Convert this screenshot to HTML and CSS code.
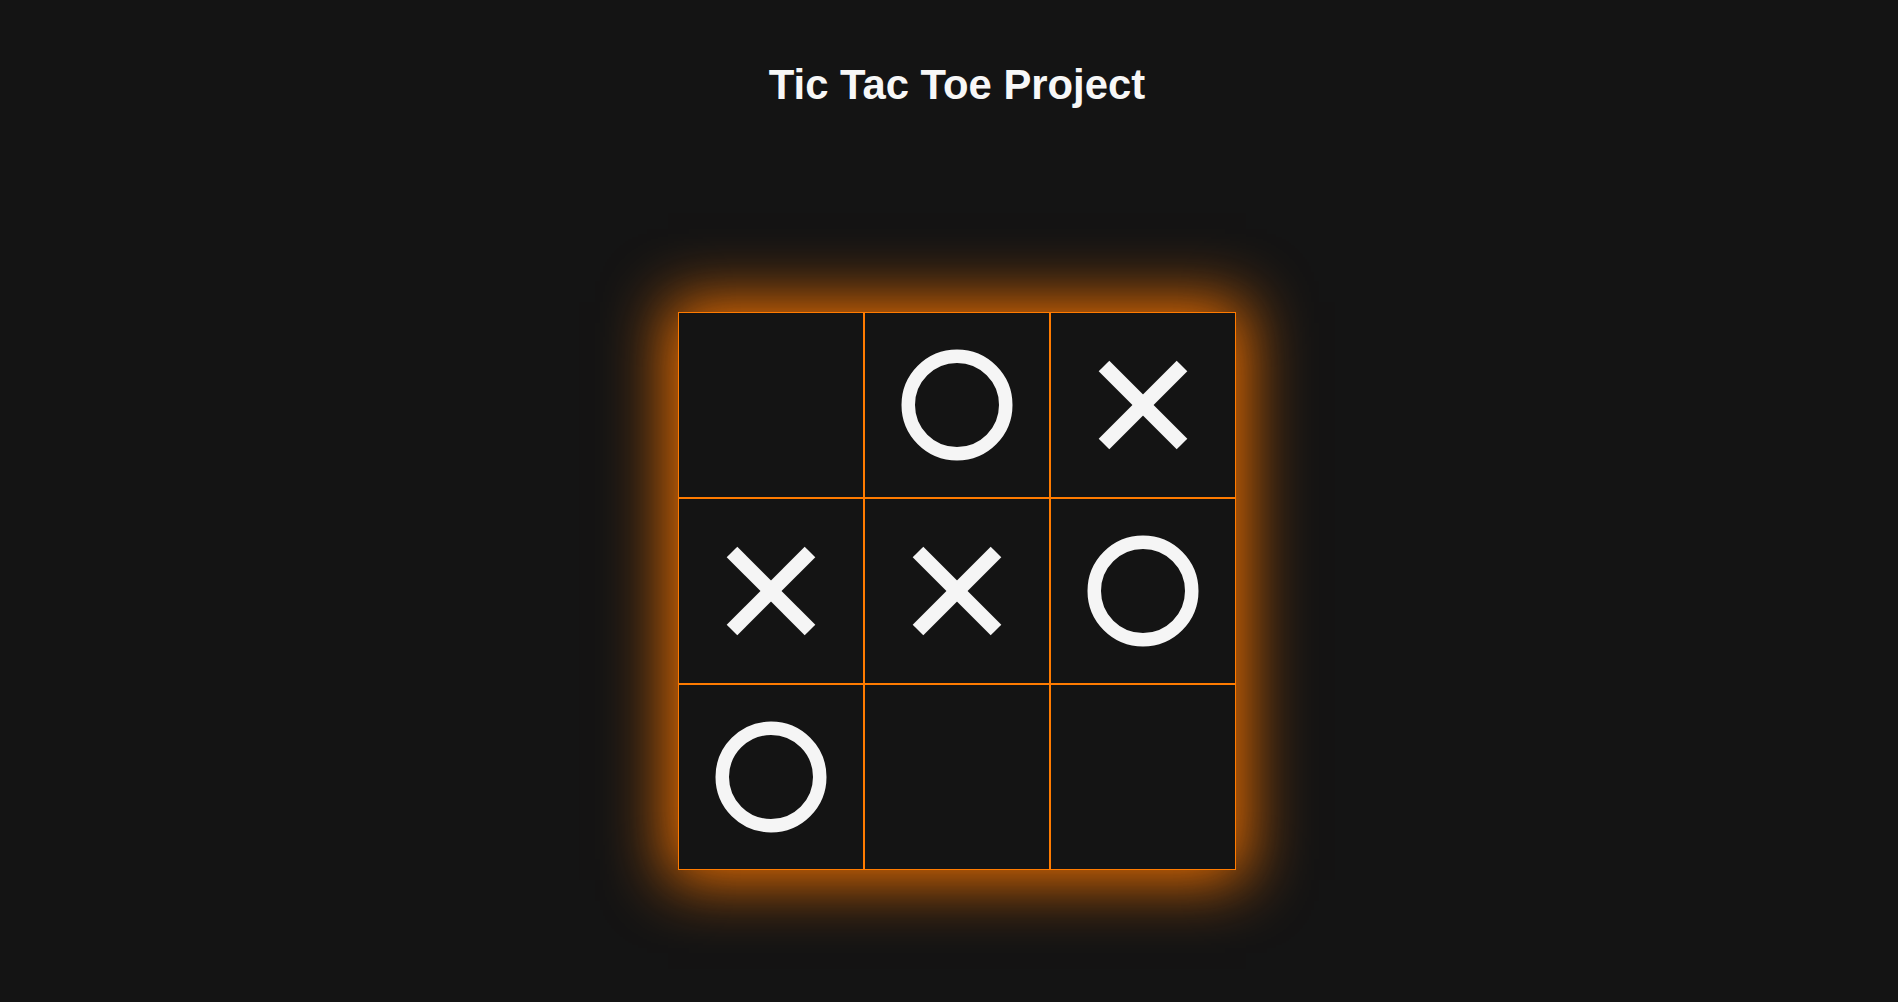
FILE: index.html
```html
<!DOCTYPE html>
<html lang="en">
<head>
<meta charset="utf-8">
<title>Tic Tac Toe Project</title>
<link rel="stylesheet" href="styles.css">
</head>
<body>
<header class="header">
  <h1 class="title">Tic Tac Toe Project</h1>
</header>
<main class="game">
  <div class="board">
    <div class="cell"></div>
    <div class="cell"><svg class="mark-o" viewBox="0 0 112 112" width="112" height="112"><circle cx="56" cy="56" r="48.75"/></svg></div>
    <div class="cell"><svg class="mark-x" viewBox="0 0 90 90" width="90" height="90"><line x1="6" y1="6" x2="84" y2="84"/><line x1="84" y1="6" x2="6" y2="84"/></svg></div>
    <div class="cell"><svg class="mark-x" viewBox="0 0 90 90" width="90" height="90"><line x1="6" y1="6" x2="84" y2="84"/><line x1="84" y1="6" x2="6" y2="84"/></svg></div>
    <div class="cell"><svg class="mark-x" viewBox="0 0 90 90" width="90" height="90"><line x1="6" y1="6" x2="84" y2="84"/><line x1="84" y1="6" x2="6" y2="84"/></svg></div>
    <div class="cell"><svg class="mark-o" viewBox="0 0 112 112" width="112" height="112"><circle cx="56" cy="56" r="48.75"/></svg></div>
    <div class="cell"><svg class="mark-o" viewBox="0 0 112 112" width="112" height="112"><circle cx="56" cy="56" r="48.75"/></svg></div>
    <div class="cell"></div>
    <div class="cell"></div>
  </div>
</main>
</body>
</html>
```

FILE: styles.css
```css
* {
  box-sizing: border-box;
}

html,
body {
  margin: 0;
  height: 100%;
  background: #141414;
}

body {
  padding-left: 16px;
  font-family: "Liberation Sans", Arial, sans-serif;
  color: #f5f5f5;
  overflow: hidden;
}

.header {
  padding-top: 61px;
  display: flex;
  justify-content: center;
}

.title {
  margin: 0;
  font-size: 41.8px;
  line-height: 47px;
  font-weight: bold;
  color: #f7f7f7;
}

.game {
  display: flex;
  justify-content: center;
  padding-top: 204px;
}

.board {
  display: grid;
  grid-template-columns: repeat(3, 186px);
  grid-template-rows: repeat(3, 186px);
  background: #141414;
  box-shadow: 0 0 60px 10px #f57300;
}

.cell {
  border: 1px solid #ff7b00;
  background: #141414;
  display: flex;
  align-items: center;
  justify-content: center;
}

.mark-o {
  display: block;
  fill: none;
  stroke: #f5f5f5;
  stroke-width: 13.5;
}

.mark-x {
  display: block;
  stroke: #f5f5f5;
  stroke-width: 15;
  stroke-linecap: butt;
}
```
